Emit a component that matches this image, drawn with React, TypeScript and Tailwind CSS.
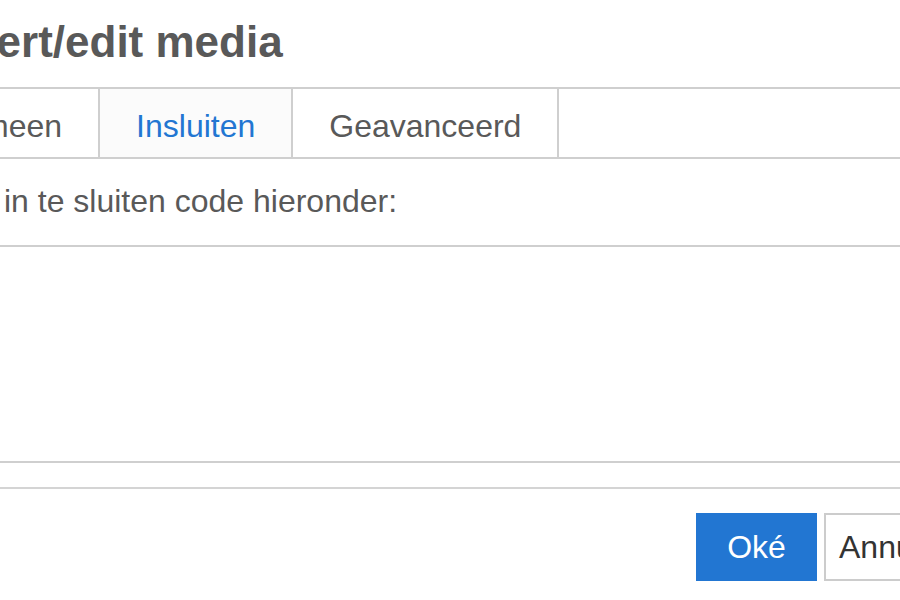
const tabs = [
    { label: 'Algemeen', active: false },
    { label: 'Insluiten', active: true },
    { label: 'Geavanceerd', active: false },
]

export default function App() {
    return (
        <div className="w-[900px] h-[600px] overflow-hidden bg-white font-['Liberation_Sans',Arial,sans-serif]">
            <div className="-ml-[117px] w-[1200px]">
                {/* TITLE */}
                <h1 className="pt-[16px] pl-[50px] text-[44px] leading-[52px] font-bold text-[#595959]">Insert/edit media</h1>

                {/* TABS */}
                <div className="mt-[19px] -ml-[1px] flex h-[72px] border-y-2 border-[#cfcfcf]">
                    {tabs.map((tab) => (
                        <div
                            key={tab.label}
                            className={`flex items-center h-full pt-[6px] px-[36px] border-r-2 border-[#cfcfcf] text-[32px] ${
                                tab.active ? 'bg-[#fbfbfb] text-[#2276d2]' : 'text-[#595959]'
                            }`}
                        >
                            {tab.label}
                        </div>
                    ))}
                </div>

                {/* EMBED */}
                <p className="mt-[24px] pl-[16px] text-[32px] leading-[36px] text-[#595959]">Plak je in te sluiten code hieronder:</p>
                <div className="mt-[26px] h-[218px] border-2 border-[#cfcfcf] bg-white" />

                {/* FOOTER */}
                <div className="mt-[24px] flex gap-[7px] border-t-2 border-[#d4d4d4] pt-[24px] pl-[813px]">
                    <button className="w-[121px] h-[68px] bg-[#2276d2] text-white text-[32px]">Oké</button>
                    <button className="h-[68px] px-[13px] border-2 border-[#cccccc] bg-white text-[#333333] text-[32px]">Annuleren</button>
                </div>
            </div>
        </div>
    )
}
